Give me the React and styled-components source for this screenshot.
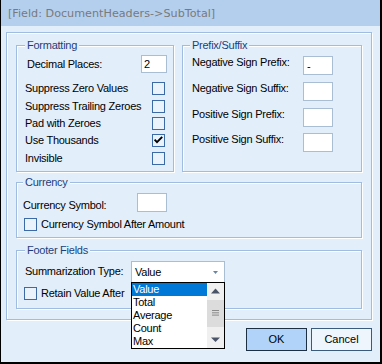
import React from "react";
import styled, { createGlobalStyle } from "styled-components";

const BG = "#e3eefb";
const LINE = "#9fbde2";

const GlobalStyle = createGlobalStyle`
  * { box-sizing: border-box; }
  html, body { margin: 0; padding: 0; background: #ffffff; }
  body {
    font-family: "Liberation Sans", Arial, sans-serif;
    font-size: 11px;
    color: #000;
  }
`;

const Window = styled.div`
  width: 382px;
  height: 364px;
  border-left: 1px solid #000;
  border-right: 2px solid #000;
  border-bottom: 2px solid #000;
  background: ${BG};
  display: flex;
  flex-direction: column;
  overflow: hidden;
`;

const TitleBar = styled.div`
  height: 26px;
  flex: none;
  background: #b4cfee;
  display: flex;
  align-items: center;
  padding: 1px 0 0 7px;
  font-family: "DejaVu Sans", Verdana, sans-serif;
  font-size: 11.2px;
  color: #7a7a7a;
  white-space: nowrap;
`;

const Body = styled.div`
  padding: 6px 8px 0 5px;
  display: flex;
  flex-direction: column;
`;

const Frame = styled.div`
  border: 1px solid ${LINE};
  box-shadow: inset 1px 1px 0 #fff, 1px 1px 0 #fff;
  padding: 12px 9px 10px 9px;
  display: flex;
  flex-direction: column;
`;

const GroupRow = styled.div`
  display: flex;
  gap: 8px;
`;

const Group = styled.div`
  border: 1px solid ${LINE};
  box-shadow: inset 1px 1px 0 #fff, 1px 1px 0 #fff;
  width: ${(p) => (p.$w ? `${p.$w}px` : "auto")};
  flex: none;
  margin-top: ${(p) => p.$mt || 0}px;
  padding-bottom: ${(p) => p.$pb || 0}px;
  display: flex;
  flex-direction: column;
`;

const Legend = styled.div`
  align-self: flex-start;
  margin: -7px 0 0 ${(p) => p.$ml}px;
  padding: 0 2px;
  height: 13px;
  line-height: 13px;
  background: ${BG};
  color: #1c3e7c;
  letter-spacing: -0.25px;
  white-space: nowrap;
`;

const Label = styled.span`
  flex: none;
  display: block;
  white-space: nowrap;
  letter-spacing: -0.25px;
  line-height: ${(p) => p.$lh || 13}px;
  width: ${(p) => (p.$w ? `${p.$w}px` : "auto")};
  margin-top: ${(p) => p.$mt || 0}px;
`;

const Field = styled.input`
  flex: none;
  width: ${(p) => p.$w}px;
  height: ${(p) => p.$h}px;
  margin: 0;
  padding: 0 0 0 ${(p) => p.$pl || 3}px;
  border: 1px solid #a9bdd5;
  background: #fff;
  font-family: "Liberation Sans", Arial, sans-serif;
  font-size: 11px;
  color: #000;
  outline: none;
`;

const FieldRow = styled.div`
  display: flex;
  align-items: ${(p) => (p.$center ? "center" : "flex-start")};
  justify-content: ${(p) => (p.$spread ? "space-between" : "flex-start")};
  margin-top: ${(p) => p.$mt || 0}px;
  padding: 0 ${(p) => p.$pr || 0}px 0 ${(p) => p.$pl || 0}px;
`;

const CheckList = styled.div`
  display: flex;
  flex-direction: column;
  margin-top: 7px;
  padding-bottom: 4px;
`;

const CheckRow = styled.div`
  height: ${(p) => p.$h || 17.4}px;
  display: flex;
  align-items: center;
  justify-content: ${(p) => (p.$spread ? "space-between" : "flex-start")};
  gap: 4px;
  margin-top: ${(p) => p.$mt || 0}px;
  padding: 0 ${(p) => p.$pr || 0}px 0 ${(p) => p.$pl || 0}px;
`;

const Box = styled.span`
  flex: none;
  width: 13px;
  height: 13px;
  border: 1px solid #3b6aa6;
  background: #eaf2fc;
  display: flex;
  align-items: center;
  justify-content: center;
`;

const PrefixGrid = styled.div`
  display: grid;
  grid-template-columns: 111px 30px;
  row-gap: 6.75px;
  margin-top: 4px;
  padding-left: 9px;
`;

const SelectWrap = styled.div`
  position: relative;
  flex: none;
  width: 94px;
  height: 23px;
`;

const SelectBox = styled.div`
  height: 100%;
  background: #fff;
  border: 1px solid #a9bdd5;
  display: flex;
  align-items: center;
  justify-content: space-between;
  padding: 0 6px 0 3px;
  letter-spacing: -0.25px;
`;

const DropList = styled.div`
  position: absolute;
  top: 21px;
  left: 0;
  width: 94px;
  height: 67px;
  border: 1px solid #000;
  background: #fff;
  display: flex;
  z-index: 2;
`;

const Items = styled.ul`
  flex: 1;
  margin: 0;
  padding: 0;
  list-style: none;
`;

const Item = styled.li`
  height: 13px;
  line-height: 13px;
  padding-left: 1px;
  letter-spacing: -0.25px;
  background: ${(p) => (p.$sel ? "#0078d7" : "transparent")};
  color: ${(p) => (p.$sel ? "#fff" : "#000")};
`;

const ScrollBar = styled.div`
  width: 17px;
  flex: none;
  background: #f0f0f0;
  display: flex;
  flex-direction: column;
`;

const ScrollBtn = styled.div`
  height: 17px;
  flex: none;
  display: flex;
`;

const Thumb = styled.div`
  height: 27px;
  flex: none;
  background: #dcdcdc;
  display: flex;
`;

const Track = styled.div`
  flex: 1;
`;

const ButtonRow = styled.div`
  display: flex;
  justify-content: flex-end;
  gap: 4px;
  margin-top: 8px;
`;

const Button = styled.button`
  width: 61px;
  height: 23px;
  margin: 0;
  padding: 0;
  font-family: "Liberation Sans", Arial, sans-serif;
  font-size: 11px;
  color: #000;
  border: 1px solid ${(p) => (p.$primary ? "#1d3043" : "#3a5a7c")};
  background: ${(p) => (p.$primary ? "#b2d3f9" : "#eef5fd")};
`;

function CheckBox({ checked }) {
  return (
    <Box>
      {checked && (
        <svg width="11" height="11" viewBox="0 0 11 11">
          <path d="M1.6 4.6 L4 7.2 L9.2 1.8" fill="none" stroke="#000" strokeWidth="1.9" />
        </svg>
      )}
    </Box>
  );
}

const formatting = [
  ["Suppress Zero Values", false],
  ["Suppress Trailing Zeroes", false],
  ["Pad with Zeroes", false],
  ["Use Thousands", true],
  ["Invisible", false],
];

const prefix = [
  ["Negative Sign Prefix:", "-"],
  ["Negative Sign Suffix:", ""],
  ["Positive Sign Prefix:", ""],
  ["Positive Sign Suffix:", ""],
];

const summaryTypes = ["Value", "Total", "Average", "Count", "Max"];

export default function App() {
  return (
    <>
      <GlobalStyle />
      <Window>
        <TitleBar>[Field: DocumentHeaders-&gt;SubTotal]</TitleBar>
        <Body>
          <Frame>
            <GroupRow>
              <Group $w={158}>
                <Legend $ml={8}>Formatting</Legend>
                <FieldRow $mt={3} $pl={10} $pr={6} $spread $center>
                  <Label>Decimal Places:</Label>
                  <Field $w={26} $h={18} $pl={2} value="2" readOnly />
                </FieldRow>
                <CheckList>
                  {formatting.map(([text, checked]) => (
                    <CheckRow key={text} $spread $pl={8} $pr={8}>
                      <Label>{text}</Label>
                      <CheckBox checked={checked} />
                    </CheckRow>
                  ))}
                </CheckList>
              </Group>
              <Group $w={180}>
                <Legend $ml={7}>Prefix/Suffix</Legend>
                <PrefixGrid>
                  {prefix.map(([text, val]) => (
                    <React.Fragment key={text}>
                      <Label $lh={12}>{text}</Label>
                      <Field $w={30} $h={19} $pl={3} value={val} readOnly />
                    </React.Fragment>
                  ))}
                </PrefixGrid>
              </Group>
            </GroupRow>

            <Group $mt={10} $pb={6}>
              <Legend $ml={6}>Currency</Legend>
              <FieldRow $mt={4} $pl={6}>
                <Label $w={114} $mt={6}>Currency Symbol:</Label>
                <Field $w={30} $h={19} value="" readOnly />
              </FieldRow>
              <CheckRow $h={13} $mt={6} $pl={7}>
                <CheckBox />
                <Label>Currency Symbol After Amount</Label>
              </CheckRow>
            </Group>

            <Group $mt={12} $pb={8}>
              <Legend $ml={8}>Footer Fields</Legend>
              <FieldRow $mt={4} $pl={8}>
                <Label $w={106} $mt={4}>Summarization Type:</Label>
                <SelectWrap>
                  <SelectBox>
                    <span>Value</span>
                    <svg width="5" height="3" viewBox="0 0 5 3">
                      <path d="M0 0 H5 L2.5 3 Z" fill="#6a84a8" />
                    </svg>
                  </SelectBox>
                  <DropList>
                    <Items>
                      {summaryTypes.map((t, i) => (
                        <Item key={t} $sel={i === 0}>{t}</Item>
                      ))}
                    </Items>
                    <ScrollBar>
                      <ScrollBtn>
                        <svg width="17" height="17" viewBox="0 0 17 17">
                          <path d="M4 10.5 H13 L8.5 5.5 Z" fill="#4a5468" />
                        </svg>
                      </ScrollBtn>
                      <Thumb>
                        <svg width="17" height="27" viewBox="0 0 17 27">
                          <path d="M5 10.5 H12 M5 12.8 H12 M5 15.1 H12" stroke="#8a8a8a" strokeWidth="1" />
                        </svg>
                      </Thumb>
                      <Track />
                      <ScrollBtn>
                        <svg width="17" height="17" viewBox="0 0 17 17">
                          <path d="M4 6.5 H13 L8.5 11 Z" fill="#4a5468" />
                        </svg>
                      </ScrollBtn>
                    </ScrollBar>
                  </DropList>
                </SelectWrap>
              </FieldRow>
              <CheckRow $h={13} $mt={3} $pl={7}>
                <CheckBox />
                <Label>Retain Value After</Label>
              </CheckRow>
            </Group>
          </Frame>
          <ButtonRow>
            <Button $primary>OK</Button>
            <Button>Cancel</Button>
          </ButtonRow>
        </Body>
      </Window>
    </>
  );
}
